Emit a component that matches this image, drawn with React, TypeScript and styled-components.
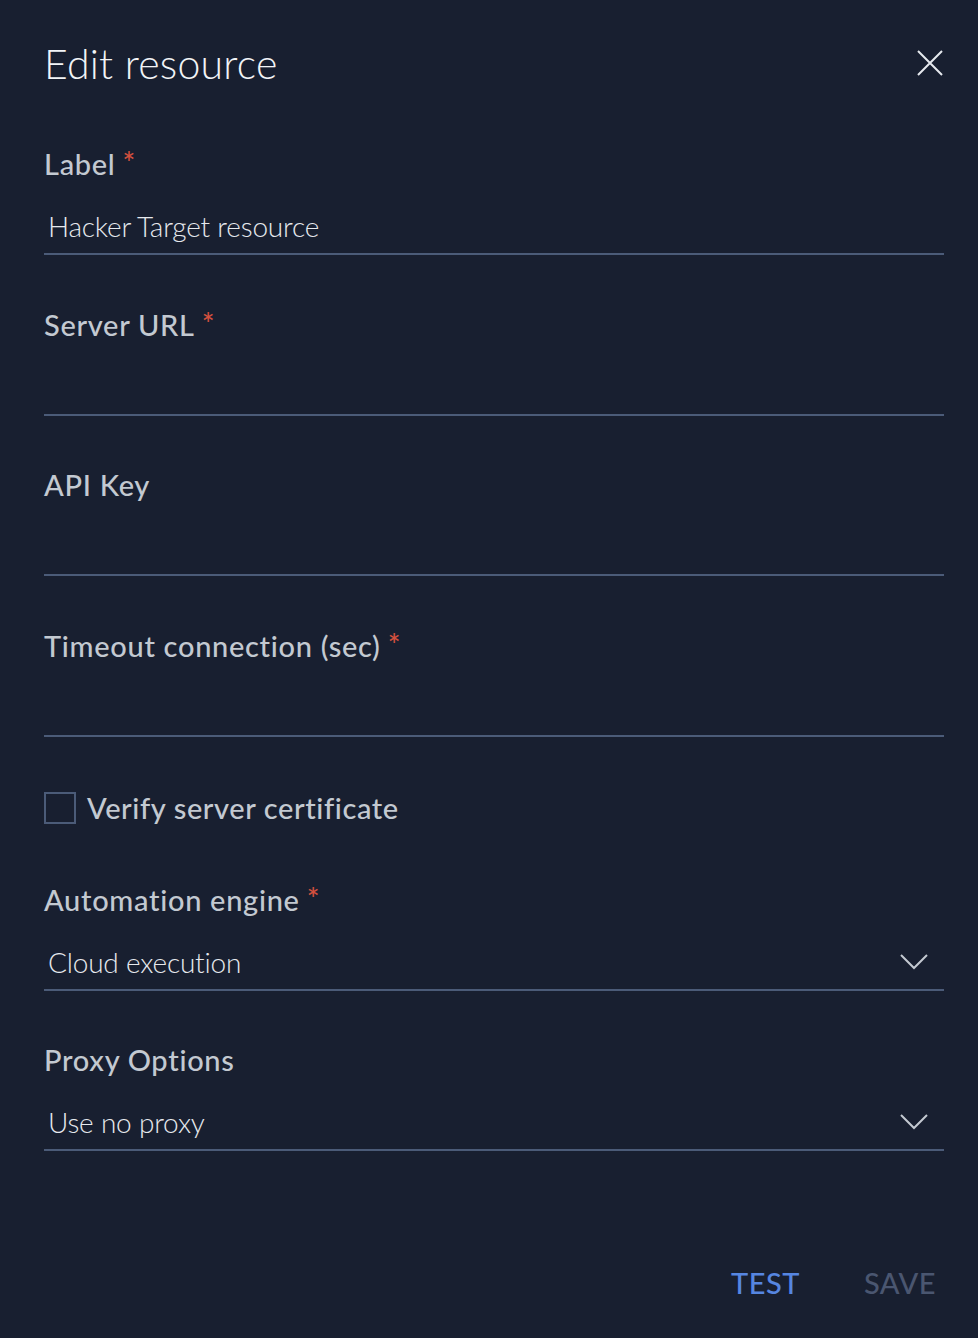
import { FC } from "react";
import styled, { createGlobalStyle } from "styled-components";

const GlobalStyle = createGlobalStyle`
  html, body {
    margin: 0;
    padding: 0;
    background: #181f30;
  }
  body {
    font-family: Lato, "Noto Sans", sans-serif;
    -webkit-font-smoothing: antialiased;
  }
`;

const colors = {
  bg: "#181f30",
  label: "#c3c9d1",
  value: "#e6e9ee",
  line: "#4b5b78",
  required: "#d4503e",
  primary: "#5686e1",
  disabled: "#4a5670",
};

const Panel = styled.div`
  box-sizing: border-box;
  width: 978px;
  height: 1338px;
  padding: 0 34px 0 44px;
  background: ${colors.bg};
  display: flex;
  flex-direction: column;
`;

const Header = styled.header`
  display: flex;
  align-items: flex-start;
  justify-content: space-between;
  height: 147px;
  padding-top: 40px;
  box-sizing: border-box;
`;

const Title = styled.h1`
  margin: 0;
  font-size: 41px;
  line-height: 48px;
  font-weight: 300;
  color: #f2f4f7;
  letter-spacing: 0.2px;
`;

const CloseButton = styled.button`
  border: 0;
  background: none;
  padding: 0;
  width: 28px;
  height: 28px;
  cursor: pointer;
  margin-top: 9px;
  display: flex;
`;

const Form = styled.div`
  display: flex;
  flex-direction: column;
`;

const Field = styled.div<{ $gap?: number }>`
  display: flex;
  flex-direction: column;
  margin-bottom: ${({ $gap }) => $gap ?? 53}px;
`;

const Label = styled.label`
  font-size: 29px;
  line-height: 32px;
  font-weight: 500;
  color: ${colors.label};
  letter-spacing: 0.7px;
`;

const Required = styled.span`
  position: relative;
  top: -1px;
  color: ${colors.required};
  margin-left: 7px;
  font-size: 30px;
`;

const InputRow = styled.div`
  display: flex;
  align-items: center;
  justify-content: space-between;
  box-sizing: border-box;
  height: 75px;
  padding: 30px 16px 11px 4px;
  border-bottom: 2px solid ${colors.line};
`;

const Value = styled.span`
  font-size: 28px;
  line-height: 32px;
  font-weight: 300;
  color: ${colors.value};
  letter-spacing: -0.2px;
`;

const CheckRow = styled.label`
  display: flex;
  align-items: center;
  gap: 11px;
  margin-top: 55px;
  margin-bottom: 59px;
`;

const Box = styled.span`
  box-sizing: border-box;
  width: 32px;
  height: 32px;
  border: 2px solid ${colors.line};
`;

const CheckText = styled.span`
  font-size: 29px;
  line-height: 32px;
  font-weight: 500;
  color: ${colors.label};
  letter-spacing: 0.6px;
`;

const Footer = styled.div`
  margin-top: auto;
  height: 110px;
  display: flex;
  justify-content: flex-end;
  align-items: center;
  gap: 64px;
  padding-right: 8px;
`;

const ActionButton = styled.button<{ $disabled?: boolean }>`
  border: 0;
  background: none;
  padding: 0;
  font-family: Lato, "Noto Sans", sans-serif;
  font-size: 29px;
  line-height: 32px;
  font-weight: 500;
  letter-spacing: 0.5px;
  color: ${({ $disabled }) => ($disabled ? colors.disabled : colors.primary)};
  cursor: ${({ $disabled }) => ($disabled ? "default" : "pointer")};
`;

const Chevron: FC = () => (
  <svg width="28" height="16" viewBox="0 0 28 16">
    <path d="M1 1 L14 14 L27 1" fill="none" stroke="#c3c9d1" strokeWidth="2" />
  </svg>
);

type FieldProps = { label: string; required?: boolean; value?: string; select?: boolean; gap?: number };

const FormField: FC<FieldProps> = ({ label, required, value, select, gap }) => (
  <Field $gap={gap}>
    <Label>
      {label}
      {required && <Required>*</Required>}
    </Label>
    <InputRow>
      <Value>{value}</Value>
      {select && <Chevron />}
    </InputRow>
  </Field>
);

const App: FC = () => (
  <>
    <GlobalStyle />
    <Panel>
      <Header>
        <Title>Edit resource</Title>
        <CloseButton aria-label="Close">
          <svg width="28" height="28" viewBox="0 0 28 28">
            <path d="M2 2 L26 26 M26 2 L2 26" stroke="#e6e9ee" strokeWidth="2" />
          </svg>
        </CloseButton>
      </Header>
      <Form>
        <FormField label="Label" required value="Hacker Target resource" />
        <FormField label="Server URL" required />
        <FormField label="API Key" />
        <FormField label="Timeout connection (sec)" required gap={0} />
        <CheckRow>
          <Box />
          <CheckText>Verify server certificate</CheckText>
        </CheckRow>
        <FormField label="Automation engine" required value="Cloud execution" select />
        <FormField label="Proxy Options" value="Use no proxy" select gap={0} />
      </Form>
      <Footer>
        <ActionButton>TEST</ActionButton>
        <ActionButton $disabled>SAVE</ActionButton>
      </Footer>
    </Panel>
  </>
);

export default App;
